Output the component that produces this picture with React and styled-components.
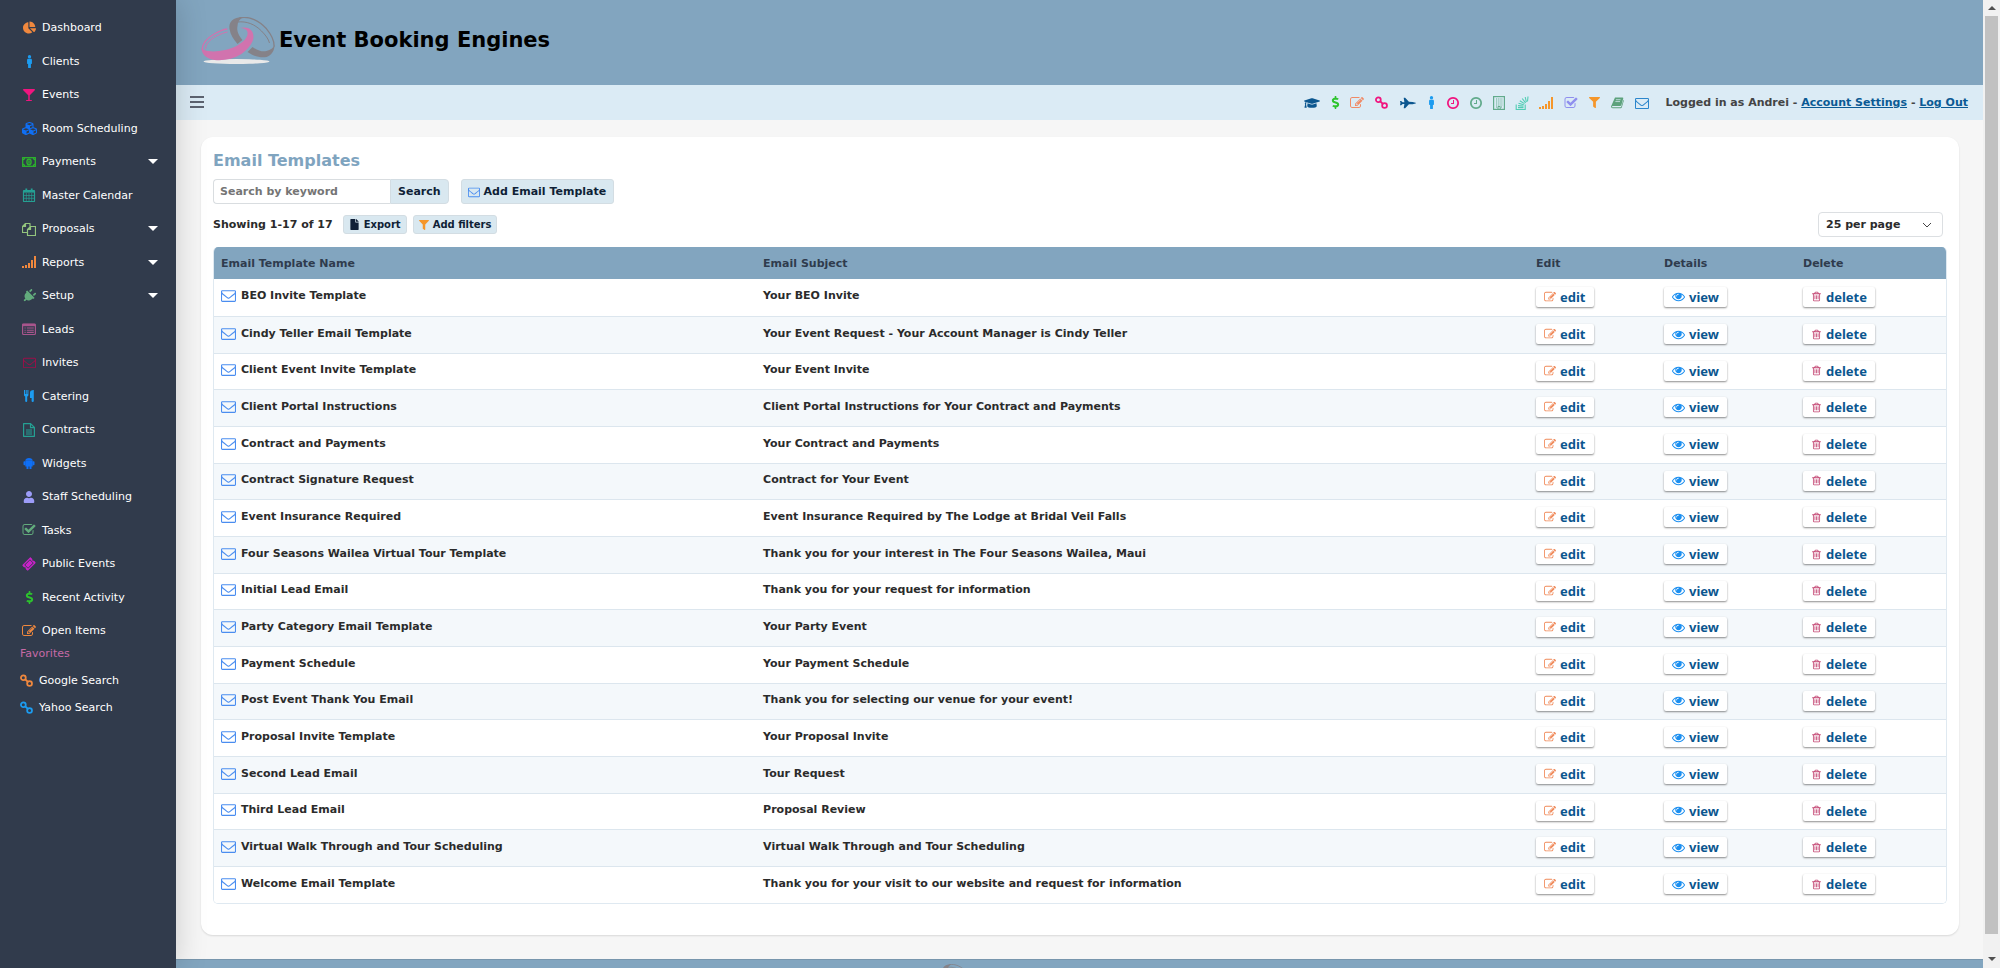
import React from 'react';
import styled, { createGlobalStyle, css } from 'styled-components';
import {
  FaChartPie, FaMale, FaGlassMartini, FaCubes, FaPlug, FaUser, FaTicketAlt, FaDollarSign,
  FaGraduationCap, FaFilter, FaFile,
} from 'react-icons/fa';

const GlobalStyle = createGlobalStyle`
  *, *::before, *::after { box-sizing: border-box; }
  body { margin: 0; background: #f6f6f6; }
  body, button, input, select {
    font-family: Verdana, "DejaVu Sans", sans-serif;
    font-size: 11px;
    font-weight: 700;
    color: #2b2b2b;
  }
`;

/* ---------- icons ---------- */

const Svg = styled.svg`
  display: block;
  flex: none;
  width: ${(p) => p.$w || 14}px;
  height: ${(p) => p.$h || 14}px;
  color: ${(p) => p.$color || 'inherit'};
`;

const PATHS = {
  mail: 'M1664 1504v-768q-32 36-69 66-268 206-426 338-51 43-83 67t-86.5 48.5-102.5 24.5h-2q-48 0-102.5-24.5t-86.5-48.5-83-67q-158-132-426-338-37-30-69-66v768q0 13 9.500 22.500t22.500 9.500h1472q13 0 22.500-9.500t9.500-22.500zm0-1051v-24.500l-.5-13-3-12.500-5.500-9-9-7.500-14-2.500h-1472q-13 0-22.500 9.500t-9.500 22.500q0 168 147 284 193 152 401 317 6 5 35 29.500t46 37.500 44.500 31.500 50.500 27.500 43 9h2q20 0 43-9t50.500-27.500 44.500-31.500 46-37.500 35-29.500q208-165 401-317 54-43 100.500-115.500t46.500-131.500zm128-37v1088q0 66-47 113t-113 47h-1472q-66 0-113-47t-47-113v-1088q0-66 47-113t113-47h1472q66 0 113 47t47 113z',
  edit: 'M888 1184l116-116-152-152-116 116v56h96v96h56zm440-720q-16-16-33 1l-350 350q-17 17-1 33t33-1l350-350q17-17 1-33zm80 594v190q0 119-84.5 203.500t-203.500 84.500h-832q-119 0-203.500-84.500t-84.500-203.500v-832q0-119 84.500-203.500t203.500-84.500h832q63 0 117 25 15 7 18 23 3 17-9 29l-49 49q-14 14-32 8-23-6-45-6h-832q-66 0-113 47t-47 113v832q0 66 47 113t113 47h832q66 0 113-47t47-113v-126q0-13 9-22l64-64q15-15 35-7t20 29zm-96-738l288 288-672 672h-288v-288zm444 132l-92 92-288-288 92-92q28-28 68-28t68 28l152 152q28 28 28 68t-28 68z',
  check: 'M1472 930v318q0 119-84.5 203.500t-203.500 84.500h-832q-119 0-203.500-84.500t-84.500-203.500v-832q0-119 84.500-203.500t203.500-84.500h832q63 0 117 25 15 7 18 23 3 17-9 29l-49 49q-10 10-23 10-3 0-9-2-23-6-45-6h-832q-66 0-113 47t-47 113v832q0 66 47 113t113 47h832q66 0 113-47t47-113v-254q0-13 9-22l64-64q10-10 23-10 6 0 12 3 20 8 20 29zm231-489l-814 814q-24 24-57 24t-57-24l-430-430q-24-24-24-57t24-57l110-110q24-24 57-24t57 24l263 263 647-647q24-24 57-24t57 24l110 110q24 24 24 57t-24 57z',
  trash: 'M704 736v576q0 14-9 23t-23 9h-64q-14 0-23-9t-9-23v-576q0-14 9-23t23-9h64q14 0 23 9t9 23zm256 0v576q0 14-9 23t-23 9h-64q-14 0-23-9t-9-23v-576q0-14 9-23t23-9h64q14 0 23 9t9 23zm256 0v576q0 14-9 23t-23 9h-64q-14 0-23-9t-9-23v-576q0-14 9-23t23-9h64q14 0 23 9t9 23zm128 724v-948h-896v948q0 22 7 40.500t14.500 27 10.500 8.500h832q3 0 10.500-8.500t14.500-27 7-40.500zm-672-1076h448l-48-117q-7-9-17-11h-317q-10 2-17 11zm928 32v64q0 14-9 23t-23 9h-96v948q0 83-47 143.500t-113 60.500h-832q-66 0-113-58.500t-47-141.500v-952h-96q-14 0-23-9t-9-23v-64q0-14 9-23t23-9h309l70-167q15-37 54-63t79-26h320q40 0 79 26t54 63l70 167h309q14 0 23 9t9 23z',
  eye: 'M1664 960q-152-236-381-353 61 104 61 225 0 185-131.5 316.500t-316.500 131.500-316.500-131.500-131.500-316.500q0-121 61-225-229 117-381 353 133 205 333.500 326.500t434.500 121.500 434.500-121.500 333.500-326.500zm-720-384q0-20-14-34t-34-14q-125 0-214.500 89.500t-89.500 214.500q0 20 14 34t34 14 34-14 14-34q0-86 61-147t147-61q20 0 34-14t14-34zm848 384q0 34-20 69-140 230-376.500 368.500t-499.500 138.500-499.500-139-376.500-368q-20-35-20-69t20-69q140-229 376.500-368t499.500-139 499.500 139 376.500 368q20 35 20 69z',
  clock: 'M1024 544v448q0 14-9 23t-23 9h-320q-14 0-23-9t-9-23v-64q0-14 9-23t23-9h224v-352q0-14 9-23t23-9h64q14 0 23 9t9 23zm416 352q0-148-73-273t-198-198-273-73-273 73-198 198-73 273 73 273 198 198 273 73 273-73 198-198 73-273zm224 0q0 209-103 385.500t-279.500 279.500-385.500 103-385.500-103-279.500-279.500-103-385.500 103-385.500 279.500-279.500 385.500-103 385.500 103 279.500 279.500 103 385.500z',
};

function PathIcon({ name, color, w, h, viewBox = '0 0 1792 1792' }) {
  return (
    <Svg $w={w} $h={h} $color={color} viewBox={viewBox} aria-hidden="true">
      <path d={PATHS[name]} fill="currentColor" />
    </Svg>
  );
}

const SHAPES = {
  signal: (
    <g fill="currentColor">
      <rect x="0" y="11" width="2" height="2" /><rect x="3" y="10" width="2" height="3" />
      <rect x="6" y="8" width="2" height="5" /><rect x="9" y="5" width="2" height="8" />
      <rect x="12" y="1" width="2" height="12" />
    </g>
  ),
  money: (
    <g fill="none" stroke="currentColor" strokeWidth="1.3">
      <rect x="0.7" y="2.7" width="12.600" height="8.600" />
      <ellipse cx="7" cy="7" rx="2.100" ry="2.800" />
      <path d="M7 5.300v3.400M.7 4.800q1.800 0 2-2M.7 9.200q1.800 0 2 2M13.300 4.800q-1.800 0-2-2M13.300 9.200q-1.800 0-2 2" />
    </g>
  ),
  calendar: (
    <g fill="none" stroke="currentColor">
      <rect x="1.500" y="2.500" width="11" height="11" rx="0.5" strokeWidth="1.200" />
      <path d="M1.500 3.500h11" strokeWidth="2.200" />
      <path d="M4.300 5v8M7 5v8M9.700 5v8M2 7.500h10M2 10.300h10" strokeWidth="0.700" />
      <path d="M4.300 .5v3M9.700 .5v3" strokeWidth="1.800" />
    </g>
  ),
  copy: (
    <g fill="none" stroke="currentColor" strokeWidth="1.200" strokeLinejoin="round">
      <path d="M5.500 10.500h-5v-6l3-3h4.500v3M.5 4.500h3v-3" />
      <path d="M8.500 4.500h5v9h-8v-6zM5.500 7.500h3v-3" />
    </g>
  ),
  list: (
    <g>
      <rect x="0.600" y="2" width="12.800" height="10.500" rx="1" fill="none" stroke="currentColor" strokeWidth="1.200" />
      <path d="M.5 3h13" stroke="currentColor" strokeWidth="2.400" />
      <path d="M2.500 6h1.200M4.800 6h7M2.500 8.200h1.200M4.800 8.200h7M2.500 10.400h1.200M4.800 10.400h7" stroke="currentColor" strokeWidth="1.100" />
    </g>
  ),
  cutlery: (
    <g fill="currentColor">
      <path d="M2 1h1v4h.7V1h1v4h.7V1h1v5q0 1-1.200 1.600V12q0 1-1 1t-1-1V7.600Q2 7 2 6z" />
      <path d="M11.800 1v11q0 1-1.100 1t-1.100-1V9H8V3.500Q8 1 11.800 1z" />
    </g>
  ),
  fileText: (
    <g fill="none" stroke="currentColor" strokeWidth="1.200" strokeLinejoin="round">
      <path d="M1.600 .7h7l3.800 3.800v8.800H1.600zM8.500 .7v4h4M4 7h6M4 9h6M4 11h6" />
    </g>
  ),
  android: (
    <g fill="currentColor">
      <path d="M3.300 4.800Q3.600 2 7 2t3.700 2.800z" />
      <path d="M3.300 4.800h7.400v5.700H9.500V13H7.500v-2.500H6.500V13H4.500v-2.500H3.300z" />
      <rect x="1.500" y="5.200" width="2" height="4" rx="0.800" />
      <rect x="10.500" y="5.200" width="2" height="4" rx="0.800" />
    </g>
  ),
  link: (
    <g fill="none" stroke="currentColor" strokeWidth="1.900">
      <circle cx="3.600" cy="4" r="2.600" /><circle cx="10.300" cy="10.200" r="2.600" />
      <path d="M5.200 5.400l3.600 3.400" />
    </g>
  ),
  building: (
    <g>
      <rect x="1.600" y="0.600" width="10.800" height="12.800" fill="none" stroke="currentColor" strokeWidth="1.200" />
      <path d="M4 3h6.500M4 5h6.500M4 7h6.500M4 9h6.500M4 11h1.500M9 11h1.500" stroke="currentColor" strokeWidth="1" strokeDasharray="1 .8" />
      <path d="M6 13v-2.500h2.200V13" fill="none" stroke="currentColor" />
    </g>
  ),
  stack: (
    <g fill="none" stroke="currentColor" strokeWidth="1.100">
      <path d="M1.200 8.500v5h9v-5" />
      <path d="M3 11.600h5.500M3 9.600l5.500.5M3.500 7.300l5.300 1.500M4.800 4.800l4.700 2.800M7.200 2.500l3.400 4.300M10.200 1l1.200 5.200M13 .5l-.5 5" />
    </g>
  ),
  jet: (
    <path
      fill="currentColor"
      d="M0 5.300h1l1.300 1h1.500V5.800L3.300 3V2.500h1.200L7.800 6l3.200.2 2.600.6.400.3-.4.300-2.600.6-3.200.2-3.300 3.500H3.300V11.200l.5-2.800V7.900H2.300L1 8.900H0l.4-1.800z"
    />
  ),
  book: (
    <g fill="currentColor">
      <path d="M4.300 1.500h8q1.200 0 .9 1.200l-2 7q-.3 1-1.400 1H2q-1 0-1 .8 0 .6.900.6h8.300q.7 0 .9-.7l2.300-7.300q.6.300.4 1.100l-2.100 7q-.3 1-1.400 1H1.800Q0 13.200 0 11.400z" />
      <path d="M5.300 4h5M4.700 6h5" stroke="#dbebf5" strokeWidth="0.800" />
    </g>
  ),
};

function ShapeIcon({ name, color, w, h }) {
  return (
    <Svg $w={w} $h={h} $color={color} viewBox="0 0 14 14" aria-hidden="true">
      {SHAPES[name]}
    </Svg>
  );
}

/* ---------- page frame ---------- */

const Page = styled.div`
  display: flex;
  height: 100vh;
  overflow: hidden;
`;

const Sidebar = styled.nav`
  position: relative;
  z-index: 2;
  flex: none;
  width: 176px;
  padding-top: 11px;
  background: #313b4c;
  box-shadow: 0 0 30px rgba(0, 0, 0, 0.18);
  overflow: hidden;
`;

const NavList = styled.ul`
  margin: 0;
  padding: 0;
  list-style: none;
`;

const NavItem = styled.li`
  height: 33px;
  &:nth-child(even) { height: 34px; }
`;

const NavLink = styled.a`
  display: flex;
  align-items: center;
  gap: 4px;
  height: 100%;
  padding: 0 18px 0 20px;
  color: #fff;
  font-size: 11px;
  font-weight: 400;
  text-decoration: none;
`;

const NavIcon = styled.span`
  display: flex;
  justify-content: center;
  width: 18px;
  color: ${(p) => p.$color};
`;

const Caret = styled.span`
  margin-left: auto;
  border: 5px solid transparent;
  border-top-color: #fff;
  border-bottom: 0;
`;

const FavoritesTitle = styled.h2`
  margin: 0;
  padding: 0 20px;
  font-size: 11px;
  font-weight: 400;
  line-height: 14px;
  color: #c66aa7;
`;

const FavoriteItem = styled.li`
  height: 27px;
`;

const FavoriteLink = styled(NavLink)`
  gap: 6px;
`;

const FavoritesList = styled(NavList)`
  padding-top: 6px;
`;

const Main = styled.div`
  flex: 1;
  min-width: 0;
  overflow-y: auto;
  scrollbar-width: none;
`;

const Header = styled.header`
  display: flex;
  align-items: flex-start;
  height: 85px;
  padding: 17px 25px;
  background: #82a5bf;
`;

const LogoLink = styled.a`
  display: flex;
  align-items: ${(p) => (p.$small ? 'flex-start' : 'center')};
  gap: 4px;
  color: #000;
  text-decoration: none;
`;

const LogoText = styled.span`
  padding-bottom: 2px;
  font-size: ${(p) => (p.$small ? 20 : 21)}px;
  font-weight: 700;
  line-height: 24px;
`;

const Toolbar = styled.div`
  display: flex;
  align-items: center;
  height: 35px;
  padding: 0 15px 0 14px;
  background: #dbebf5;
`;

const MenuButton = styled.button`
  display: flex;
  flex-direction: column;
  gap: 3px;
  padding: 0 0 2px;
  margin-right: auto;
  border: 0;
  background: none;
`;

const MenuBar = styled.span`
  width: 14px;
  height: 2px;
  background: #5c6370;
`;

const QuickLinks = styled.div`
  display: flex;
  align-items: center;
  gap: 11px;
`;

const QuickLink = styled.a`
  display: flex;
  justify-content: center;
  width: ${(p) => p.$w}px;
  color: ${(p) => p.$color};
  svg { flex: none; }
`;

const Account = styled.span`
  padding-left: 6px;
  color: #444;
  a { color: #0b5a94; }
`;

const Content = styled.main`
  padding: 17px 24px 24px 25px;
`;

const Card = styled.section`
  padding: 12px 12px 31px;
  border-radius: 12px;
  background: #fff;
  box-shadow: 0 1px 2px rgba(0, 0, 0, 0.12);
`;

const Title = styled.h1`
  margin: 0 0 6px;
  font-size: 16px;
  font-weight: 700;
  line-height: 24px;
  color: #7fa4bf;
`;

const SearchRow = styled.form`
  display: flex;
  height: 25px;
  margin-bottom: 8px;
`;

const SearchInput = styled.input`
  width: 177px;
  padding: 0 6px;
  border: 1px solid #d9dde0;
  border-right: 0;
  border-radius: 4px 0 0 4px;
  outline: 0;
  &::placeholder { color: #757575; }
`;

const softButton = css`
  display: flex;
  align-items: center;
  border: 1px solid #d3dde3;
  border-radius: 3px;
  background: #d9e8f0;
  color: #0f1f36;
  white-space: nowrap;
`;

const SearchButton = styled.button`
  ${softButton}
  padding: 0 7px;
  border-radius: 0 4px 4px 0;
`;

const AddButton = styled.button`
  ${softButton}
  gap: 4px;
  margin-left: 12px;
  padding: 0 7px 0 6px;
`;

const ListRow = styled.div`
  display: flex;
  align-items: center;
  height: 25px;
  margin-bottom: 10px;
  padding-right: 4px;
`;

const Count = styled.span`
  margin-right: 10px;
`;

const SmallButton = styled.button`
  ${softButton}
  gap: 4px;
  height: 19px;
  margin-right: 6px;
  padding: 0 5px;
  font-size: 10px;
`;

const SelectBox = styled.div`
  display: flex;
  align-items: center;
  margin-left: auto;
  height: 25px;
  padding-right: 10px;
  border: 1px solid #dcdfe2;
  border-radius: 4px;
`;

const PageSize = styled.select`
  appearance: none;
  width: 103px;
  height: 23px;
  padding: 0 7px;
  border: 0;
  outline: 0;
  background: transparent;
`;

/* ---------- table ---------- */

const TableFrame = styled.div`
  overflow: hidden;
  border: 1px solid #dfe9f1;
  border-top: 0;
  border-radius: 5px;
`;

const Table = styled.table`
  width: 100%;
  table-layout: fixed;
  border-collapse: collapse;
`;

const Col = styled.col`
  width: ${(p) => p.$w};
`;

const HeadCell = styled.th`
  height: 32px;
  padding: 0 7px;
  background: #82a5bf;
  color: #2f3b4d;
  text-align: left;
`;

const Row = styled.tr`
  height: 37px;
  background: #fff;
  &:nth-child(3n) { height: 36px; }
  &:nth-child(even) { background: #f4f8fb; }
  & + & { border-top: 1px solid #dce6ee; }
`;

const Cell = styled.td`
  padding: 0 7px 3px;
`;

const ActionCell = styled.td`
  padding: 0 7px 1px;
`;

const Name = styled.span`
  display: flex;
  align-items: center;
  gap: 5px;
`;

const ActionButton = styled.button`
  display: flex;
  align-items: center;
  gap: 4px;
  height: 20px;
  padding: 0 8px;
  border: 0;
  border-radius: 2px;
  background: #fff;
  box-shadow: 0 1px 2px rgba(0, 0, 0, 0.45);
  color: #0b568f;
  font-family: "Noto Sans", sans-serif;
  font-size: 13px;
  line-height: 18px;
`;

/* ---------- footer and scroll strip ---------- */

const Footer = styled.footer`
  display: flex;
  justify-content: center;
  padding: 4px 0 20px;
  border-top: 1px solid #7896ad;
  background: #82a5bf;
`;

const ScrollStrip = styled.div`
  display: flex;
  flex-direction: column;
  align-items: center;
  justify-content: space-between;
  flex: none;
  width: 17px;
  padding: 6px 0 7px;
  background: #f1f1f1;
`;

const ScrollThumb = styled.div`
  flex: 1;
  width: 13px;
  margin: 6px 0 23px;
  background: #c1c1c1;
`;

const ScrollArrow = styled.span`
  border: 4px solid transparent;
  ${(p) => (p.$up
    ? css`border-top: 0; border-bottom-color: #505050;`
    : css`border-bottom: 0; border-top-color: #505050;`)}
`;

function Rings({ w, h }) {
  return (
    <Svg $w={w} $h={h} viewBox="0 0 73 47" aria-hidden="true">
      <ellipse cx="35" cy="44.500" rx="33" ry="2.500" fill="#e9e9e9" />
      <g fill="#858288">
        <path d="M42 0C31 0 27 5 28 12c1 6 4 10 8 15l5-4c-4-5-6-9-5-14 0-4 2-7 6-9z" />
        <path d="M73 28c0 6-3 10-8 12-7 1-13-1-19-5l5-5c6 4 10 5 14 4 4-1 7-3 8-6z" />
      </g>
      <g fill="none" stroke="#858288">
        <path d="M38 .8c10-2 20 3 27 11 5 6 8 12 7.500 18" strokeWidth="1.300" />
        <path d="M36 5c9-1 17 2 24 9 4 4 7 8 8 12" strokeWidth="1" />
      </g>
      <path fill="#d173ae" d="M38 11c8-2 14 1 14 9 0 5-5 12-12 17-8 5-18 7-27 6C5 42 0 37 0 31l3 2c7 3 22 1 32-4 7-4 12-9 11-14-1-3-4-4-8-4z" />
      <g fill="none" stroke="#d173ae">
        <path d="M.8 32c0-6 5-11 12-15 5-3 9-4.500 13-5" strokeWidth="1.300" />
        <path d="M4 32c0-5 5-10 11-13 4-2 8-3.500 11-4" strokeWidth="1" />
      </g>
    </Svg>
  );
}

const NAV = [
  ['Dashboard', '#f0883e', <FaChartPie size={13} />],
  ['Clients', '#1c9cf0', <FaMale size={13} />],
  ['Events', '#f0157f', <FaGlassMartini size={12} />],
  ['Room Scheduling', '#0f6ff5', <FaCubes size={15} />],
  ['Payments', '#2db52d', <ShapeIcon name="money" />, true],
  ['Master Calendar', '#25a093', <ShapeIcon name="calendar" />],
  ['Proposals', '#93c47d', <ShapeIcon name="copy" />, true],
  ['Reports', '#f0883e', <ShapeIcon name="signal" />, true],
  ['Setup', '#62ab7c', <PlugIcon />, true],
  ['Leads', '#a8558c', <ShapeIcon name="list" />],
  ['Invites', '#9c0f48', <PathIcon name="mail" w={13} h={13} />],
  ['Catering', '#1c9cf0', <ShapeIcon name="cutlery" />],
  ['Contracts', '#25a093', <ShapeIcon name="fileText" />],
  ['Widgets', '#0f6ff5', <ShapeIcon name="android" />],
  ['Staff Scheduling', '#9c9cf8', <FaUser size={12} />],
  ['Tasks', '#62ab7c', <PathIcon name="check" />],
  ['Public Events', '#c922c9', <TicketIcon />],
  ['Recent Activity', '#2dc32d', <FaDollarSign size={13} />],
  ['Open Items', '#f0883e', <PathIcon name="edit" />],
];

function PlugIcon() {
  return (
    <Svg $w={14} $h={14} viewBox="0 0 14 14" aria-hidden="true">
      <g transform="rotate(45 7 7)"><FaPlug x={0} y={0} size={14} /></g>
    </Svg>
  );
}

function TicketIcon() {
  return (
    <Svg $w={14} $h={14} viewBox="0 0 14 14" aria-hidden="true">
      <g transform="rotate(-45 7 7)"><FaTicketAlt x={1} y={1} size={12} /></g>
    </Svg>
  );
}

const QUICK = [
  ['Training', '#0b568f', 17, <FaGraduationCap size={16} />],
  ['Payments', '#2dc32d', 8, <FaDollarSign size={13} />],
  ['Open items', '#f08a66', 14, <PathIcon name="edit" />],
  ['Links', '#f0157f', 13, <ShapeIcon name="link" w={13} h={13} />],
  ['Launch', '#0b568f', 17, <ShapeIcon name="jet" w={16} h={16} />],
  ['Clients', '#1c9cf0', 9, <FaMale size={13} />],
  ['Upcoming', '#f0157f', 12, <PathIcon name="clock" />],
  ['Recent', '#62ab8c', 12, <PathIcon name="clock" />],
  ['Venues', '#62ab8c', 12, <ShapeIcon name="building" />],
  ['Stack', '#52cdb4', 12, <ShapeIcon name="stack" />],
  ['Reports', '#f5962a', 14, <ShapeIcon name="signal" />],
  ['Tasks', '#8f8fee', 14, <PathIcon name="check" />],
  ['Leads', '#f5962a', 11, <FaFilter size={11} />],
  ['Catalog', '#5da27c', 13, <ShapeIcon name="book" w={13} h={13} />],
  ['Email', '#2c86cc', 13, <PathIcon name="mail" />],
];

const TEMPLATES = [
  ['BEO Invite Template', 'Your BEO Invite'],
  ['Cindy Teller Email Template', 'Your Event Request - Your Account Manager is Cindy Teller'],
  ['Client Event Invite Template', 'Your Event Invite'],
  ['Client Portal Instructions', 'Client Portal Instructions for Your Contract and Payments'],
  ['Contract and Payments', 'Your Contract and Payments'],
  ['Contract Signature Request', 'Contract for Your Event'],
  ['Event Insurance Required', 'Event Insurance Required by The Lodge at Bridal Veil Falls'],
  ['Four Seasons Wailea Virtual Tour Template', 'Thank you for your interest in The Four Seasons Wailea, Maui'],
  ['Initial Lead Email', 'Thank you for your request for information'],
  ['Party Category Email Template', 'Your Party Event'],
  ['Payment Schedule', 'Your Payment Schedule'],
  ['Post Event Thank You Email', 'Thank you for selecting our venue for your event!'],
  ['Proposal Invite Template', 'Your Proposal Invite'],
  ['Second Lead Email', 'Tour Request'],
  ['Third Lead Email', 'Proposal Review'],
  ['Virtual Walk Through and Tour Scheduling', 'Virtual Walk Through and Tour Scheduling'],
  ['Welcome Email Template', 'Thank you for your visit to our website and request for information'],
];

const FAVORITES = [['Google Search', '#f0883e'], ['Yahoo Search', '#1c9cf0']];

export default function App() {
  return (
    <Page>
      <GlobalStyle />
      <Sidebar aria-label="Main">
        <NavList>
          {NAV.map(([label, color, icon, hasMenu]) => (
            <NavItem key={label}>
              <NavLink href="#">
                <NavIcon $color={color}>{icon}</NavIcon>
                {label}
                {hasMenu && <Caret />}
              </NavLink>
            </NavItem>
          ))}
        </NavList>
        <FavoritesTitle>Favorites</FavoritesTitle>
        <FavoritesList>
          {FAVORITES.map(([label, color]) => (
            <FavoriteItem key={label}>
              <FavoriteLink href="#">
                <ShapeIcon name="link" color={color} w={13} h={13} />
                {label}
              </FavoriteLink>
            </FavoriteItem>
          ))}
        </FavoritesList>
      </Sidebar>

      <Main>
        <Header>
          <LogoLink href="#">
            <Rings w={74} h={47} />
            <LogoText>Event Booking Engines</LogoText>
          </LogoLink>
        </Header>
        <Toolbar>
          <MenuButton type="button" aria-label="Toggle menu">
            <MenuBar /><MenuBar /><MenuBar />
          </MenuButton>
          <QuickLinks>
            {QUICK.map(([label, color, w, icon]) => (
              <QuickLink key={label} href="#" aria-label={label} $color={color} $w={w}>{icon}</QuickLink>
            ))}
            <Account>
              Logged in as Andrei - <a href="#">Account Settings</a> - <a href="#">Log Out</a>
            </Account>
          </QuickLinks>
        </Toolbar>

        <Content>
          <Card>
            <Title>Email Templates</Title>
            <SearchRow>
              <SearchInput type="text" placeholder="Search by keyword" aria-label="Search by keyword" />
              <SearchButton type="button">Search</SearchButton>
              <AddButton type="button">
                <PathIcon name="mail" color="#4a8df0" w={12} h={12} />
                Add Email Template
              </AddButton>
            </SearchRow>
            <ListRow>
              <Count>Showing 1-17 of 17</Count>
              <SmallButton type="button"><FaFile size={11} />Export</SmallButton>
              <SmallButton type="button"><FaFilter size={10} color="#f5962a" />Add filters</SmallButton>
              <SelectBox>
                <PageSize aria-label="Rows per page" defaultValue="25">
                  <option value="25">25 per page</option>
                  <option value="50">50 per page</option>
                </PageSize>
                <Svg $w={10} $h={10} viewBox="0 0 10 10" aria-hidden="true">
                  <path d="M1 3L5 7 9 3" fill="none" stroke="#444" strokeWidth="1" />
                </Svg>
              </SelectBox>
            </ListRow>
            <TableFrame>
              <Table>
                <colgroup>
                  <Col $w="31.3%" /><Col /><Col $w="128px" /><Col $w="139px" /><Col $w="150px" />
                </colgroup>
                <thead>
                  <tr>
                    {['Email Template Name', 'Email Subject', 'Edit', 'Details', 'Delete'].map((h) => (
                      <HeadCell key={h} scope="col">{h}</HeadCell>
                    ))}
                  </tr>
                </thead>
                <tbody>
                  {TEMPLATES.map(([name, subject]) => (
                    <Row key={name}>
                      <Cell><Name><PathIcon name="mail" color="#4a8df0" w={15} h={15} />{name}</Name></Cell>
                      <Cell>{subject}</Cell>
                      <ActionCell>
                        <ActionButton type="button"><PathIcon name="edit" color="#f08a5a" w={12} h={12} />edit</ActionButton>
                      </ActionCell>
                      <ActionCell>
                        <ActionButton type="button"><PathIcon name="eye" color="#1c8ff0" w={13} h={13} />view</ActionButton>
                      </ActionCell>
                      <ActionCell>
                        <ActionButton type="button"><PathIcon name="trash" color="#c2416f" w={11} h={11} />delete</ActionButton>
                      </ActionCell>
                    </Row>
                  ))}
                </tbody>
              </Table>
            </TableFrame>
          </Card>
        </Content>

        <Footer>
          <LogoLink href="#" $small>
            <Rings w={46} h={30} />
            <LogoText $small>Event Booking Engines</LogoText>
          </LogoLink>
        </Footer>
      </Main>

      <ScrollStrip aria-hidden="true">
        <ScrollArrow $up />
        <ScrollThumb />
        <ScrollArrow />
      </ScrollStrip>
    </Page>
  );
}
